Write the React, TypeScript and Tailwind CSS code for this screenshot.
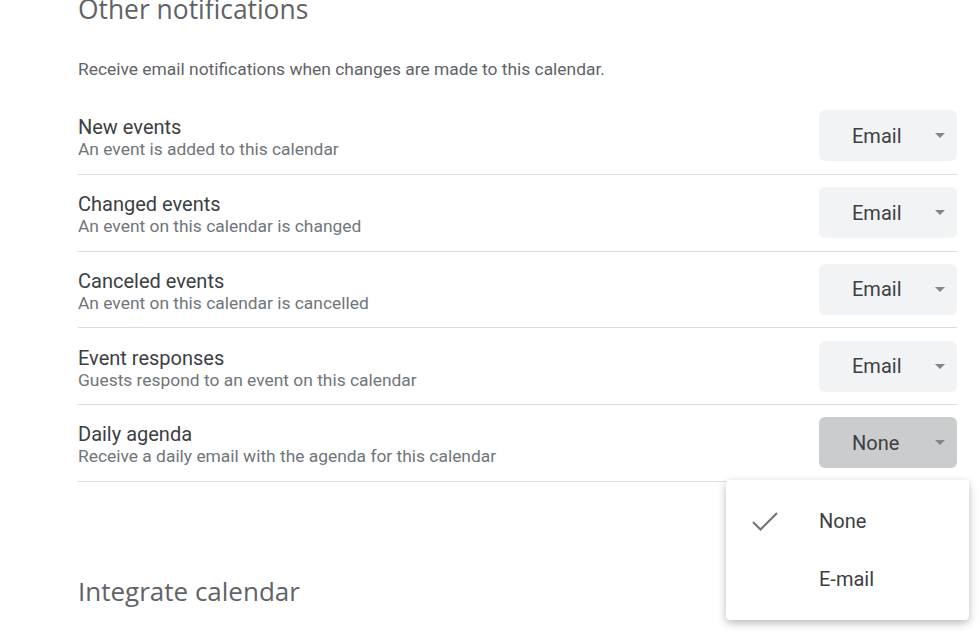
import { useState } from "react";

type Row = {
  title: string;
  desc: string;
  value: string;
};

const ROWS: Row[] = [
  { title: "New events", desc: "An event is added to this calendar", value: "Email" },
  { title: "Changed events", desc: "An event on this calendar is changed", value: "Email" },
  { title: "Canceled events", desc: "An event on this calendar is cancelled", value: "Email" },
  { title: "Event responses", desc: "Guests respond to an event on this calendar", value: "Email" },
  { title: "Daily agenda", desc: "Receive a daily email with the agenda for this calendar", value: "None" },
];

const Caret = () => (
  <svg width="10" height="5" viewBox="0 0 10 5" className="shrink-0">
    <path d="M0 0 L10 0 L5 5 Z" fill="#80868b" />
  </svg>
);

const SelectButton = ({ value, open }: { value: string; open: boolean }) => (
  <div
    className={
      open
        ? "flex h-[51px] w-[138px] items-center rounded-md bg-[#cbcccd] pl-[33px] pr-[12px]"
        : "flex h-[51px] w-[138px] items-center rounded-md bg-[#f1f3f4] pl-[33px] pr-[12px]"
    }
  >
    <span className="flex-1 text-[20px] text-[#3c4043]">{value}</span>
    <Caret />
  </div>
);

const App = () => {
  const [open] = useState(true);

  return (
    <div
      className="relative h-[634px] w-[980px] overflow-hidden bg-white"
      style={{ fontFamily: "Roboto, 'Noto Sans', sans-serif" }}
    >
      <div className="flex w-[957px] flex-col pl-[78px]">
        <h2
          className="mt-[-8px] text-[26.4px] leading-[34px] text-[#5f6368]"
          style={{ fontFamily: "'Open Sans', Roboto, sans-serif" }}
        >
          Other notifications
        </h2>
        <p className="mt-[32px] text-[17.4px] leading-[22px] text-[#5f6368]">
          Receive email notifications when changes are made to this calendar.
        </p>

        <div className="mt-[18px] flex flex-col">
          {ROWS.map((row, i) => (
            <div
              key={row.title}
              className="flex h-[76.75px] items-center border-b border-[#dadce0]"
            >
              <div className="flex flex-1 flex-col pt-[5px]">
                <span className="text-[20px] leading-[23px] text-[#3c4043]">{row.title}</span>
                <span className="text-[17.4px] leading-[21px] text-[#70757a]">{row.desc}</span>
              </div>
              <SelectButton value={row.value} open={open && i === ROWS.length - 1} />
            </div>
          ))}
        </div>

        <h2
          className="mt-[92px] text-[26px] leading-[34px] text-[#5f6368]"
          style={{ fontFamily: "'Open Sans', Roboto, sans-serif" }}
        >
          Integrate calendar
        </h2>
      </div>

      {open && (
        <div className="absolute left-[726px] top-[480px] flex h-[140px] w-[243px] flex-col justify-center rounded-[4px] bg-white py-[8px] shadow-[0_3px_8px_rgba(0,0,0,0.28)]">
          <div className="flex h-[58px] items-center">
            <div className="flex w-[93px] pl-[25px]">
              <svg width="28" height="22" viewBox="0 0 28 22">
                <path d="M2 12 L9.5 19.5 L26 3" fill="none" stroke="#757575" strokeWidth="2.2" />
              </svg>
            </div>
            <span className="text-[20px] text-[#3c4043]">None</span>
          </div>
          <div className="flex h-[58px] items-center">
            <div className="w-[93px]" />
            <span className="text-[20px] text-[#3c4043]">E-mail</span>
          </div>
        </div>
      )}
    </div>
  );
};

export default App;
